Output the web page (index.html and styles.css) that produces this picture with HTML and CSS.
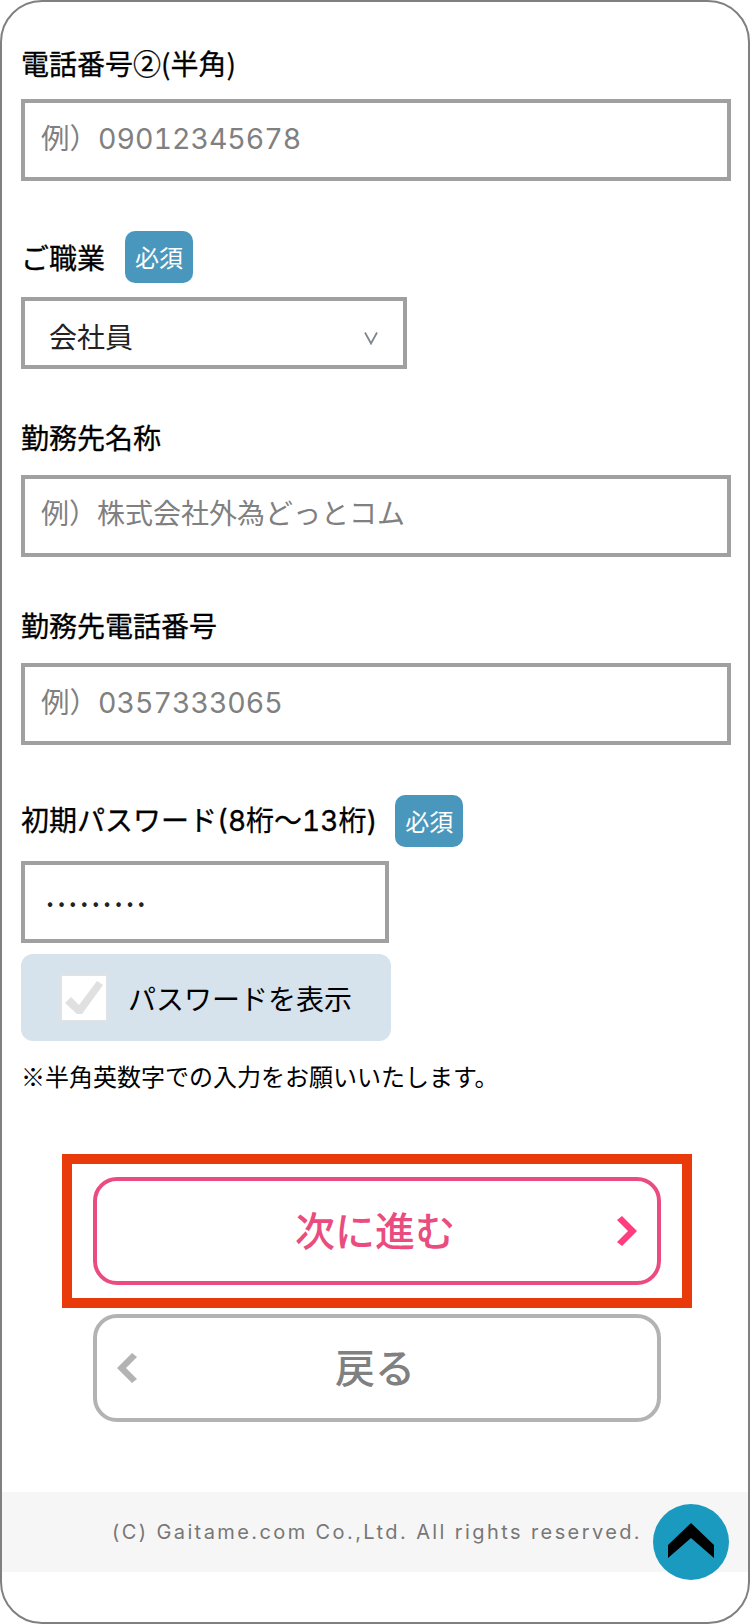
FILE: index.html
```html
<!DOCTYPE html>
<html lang="ja">
<head>
  <meta charset="UTF-8">
  <title>口座開設 お客様情報</title>
  <link rel="stylesheet" href="styles.css">
</head>
<body>

<div class="frame">
  <form class="form">
    <div class="field field-tel2">
      <label class="label">電話番号②(半角)</label>
      <input class="text-input num-input" type="text" placeholder="例）09012345678">
    </div>

    <div class="field field-job">
      <div class="label-row">
        <label class="label">ご職業</label>
        <span class="badge">必須</span>
      </div>
      <div class="select-wrap">
        <select class="select">
          <option>会社員</option>
        </select>
        <svg class="select-caret" width="14" height="14" viewBox="0 0 14 14">
          <path d="M1 1.5 L7 12.5 L13 1.5" fill="none" stroke="#7f868c" stroke-width="1.8"/>
        </svg>
      </div>
    </div>

    <div class="field field-company">
      <label class="label">勤務先名称</label>
      <input class="text-input" type="text" placeholder="例）株式会社外為どっとコム">
    </div>

    <div class="field field-company-tel">
      <label class="label">勤務先電話番号</label>
      <input class="text-input num-input" type="text" placeholder="例）0357333065">
    </div>

    <div class="field field-pass">
      <div class="label-row pass-row">
        <label class="label pass-label">初期パスワード(8桁～13桁)</label>
        <span class="badge">必須</span>
      </div>
      <input class="text-input pass-input" type="password" value="password1">
      <label class="show-pass">
        <span class="check">
          <svg width="44" height="44" viewBox="0 0 44 44">
            <path d="M3 27 L9 21 L17 29 L35 5 L41 9 L20 38 L15 38 Z" fill="#e0e0e0"/>
          </svg>
        </span>
        パスワードを表示
      </label>
      <p class="note">※半角英数字での入力をお願いいたします。</p>
    </div>

    <div class="actions">
      <div class="highlight">
        <button class="btn btn-next" type="button">
          次に進む
          <svg class="btn-arrow arrow-right" width="20" height="30" viewBox="0 0 20 30">
            <path d="M5 0 L20 15 L5 30 L0 26 L11 15 L0 4 Z" fill="#ff3d7f"/>
          </svg>
        </button>
      </div>
      <button class="btn btn-back" type="button">
        <svg class="btn-arrow arrow-left" width="20" height="30" viewBox="0 0 20 30">
          <path d="M15 0 L0 15 L15 30 L20 26 L9 15 L20 4 Z" fill="#b3b3b3"/>
        </svg>
        戻る
      </button>
    </div>
  </form>

  <footer class="footer">(C) Gaitame.com Co.,Ltd. All rights reserved.</footer>

  <a class="to-top" href="#">
    <svg width="46" height="35" viewBox="0 0 46 35">
      <path d="M23 0 L46 22 L46 35 L23 15 L0 35 L0 22 Z" fill="#000"/>
    </svg>
  </a>
</div>

</body>
</html>
```

FILE: styles.css
```css
* {
  box-sizing: border-box;
}

body {
  margin: 0;
  background: #fff;
  font-family: "Noto Sans CJK JP", "Noto Sans", sans-serif;
  color: #000;
}

.frame {
  position: relative;
  width: 750px;
  height: 1624px;
  border: 2px solid #808080;
  border-radius: 42px;
  overflow: hidden;
  background: #fff;
}

.form {
  padding: 0 17px 0 19px;
}

.field-tel2 {
  padding-top: 43px;
}

.field-job {
  padding-top: 50px;
}

.field-company {
  padding-top: 50px;
}

.field-company-tel {
  padding-top: 50px;
}

.field-pass {
  padding-top: 50px;
}

.label {
  display: block;
  font-size: 28px;
  line-height: 36px;
  -webkit-text-stroke: 0.3px #000;
}

.pass-label {
  font-family: "Inter", "Noto Sans CJK JP", sans-serif;
  font-variant-numeric: tabular-nums;
}

.label-row {
  display: flex;
  align-items: center;
  gap: 20px;
}

.pass-row {
  gap: 18px;
}

.field-tel2 .label {
  margin-bottom: 18px;
}

.field-company .label,
.field-company-tel .label {
  margin-bottom: 20px;
}

.badge {
  width: 68px;
  height: 52px;
  border-radius: 10px;
  background: #4a97bd;
  color: #fff;
  font-size: 24px;
  line-height: 52px;
  text-align: center;
}

.text-input {
  display: block;
  width: 100%;
  height: 82px;
  padding: 0 16px 8px;
  border: 4px solid #a0a0a0;
  border-radius: 0;
  background: #fff;
  font-family: inherit;
  font-size: 28px;
  color: #222;
}

.text-input::placeholder {
  color: #808080;
  opacity: 1;
}

.num-input {
  padding: 0 16px 4px;
  font-family: "Inter", "Noto Sans CJK JP", sans-serif;
  font-size: 28.5px;
  font-variant-numeric: tabular-nums;
}

.select-wrap {
  position: relative;
  width: 386px;
  margin-top: 14px;
}

.select {
  display: block;
  width: 100%;
  height: 72px;
  padding: 5px 24px 0;
  border: 4px solid #a0a0a0;
  border-radius: 0;
  background: #fff;
  font-family: inherit;
  font-size: 28px;
  color: #222;
  appearance: none;
}

.select-caret {
  position: absolute;
  top: 34px;
  right: 29px;
}

.pass-input {
  width: 368px;
  margin-top: 14px;
  padding: 0 22px;
  font-size: 18px;
  letter-spacing: 5.3px;
}

.show-pass {
  display: flex;
  align-items: center;
  gap: 20px;
  width: 370px;
  height: 87px;
  margin-top: 11px;
  padding-left: 39px;
  border-radius: 12px;
  background: #d6e2ec;
  font-size: 28px;
}

.check {
  display: flex;
  width: 48px;
  height: 48px;
  align-items: center;
  justify-content: center;
  border: 2px solid #dfe3e6;
  background: #fff;
}

.note {
  margin: 17px 0 0;
  font-size: 24px;
  line-height: 36px;
}

.actions {
  display: flex;
  flex-direction: column;
  align-items: center;
  gap: 6px;
  margin: 60px 0 0 2px;
}

.highlight {
  width: 630px;
  padding: 13px 21px;
  border: 10px solid #e83a0a;
}

.btn {
  position: relative;
  display: block;
  width: 568px;
  height: 108px;
  padding: 0 4px 4px 0;
  border: 4px solid;
  border-radius: 24px;
  background: #fff;
  font-family: inherit;
  font-size: 40px;
  font-weight: 500;
}

.btn-next {
  border-color: #ea4c7f;
  color: #ea4c7f;
}

.btn-back {
  border-color: #b3b3b3;
  color: #808080;
}

.btn-arrow {
  position: absolute;
  top: 35px;
}

.arrow-right {
  right: 20px;
}

.arrow-left {
  left: 20px;
}

.footer {
  height: 80px;
  margin-top: 70px;
  padding: 0 0 0 110px;
  background: #f6f6f6;
  color: #777;
  font-family: "Inter", "Noto Sans", sans-serif;
  font-size: 20px;
  line-height: 80px;
  letter-spacing: 2.4px;
}

.to-top {
  position: absolute;
  top: 1502px;
  left: 651px;
  display: flex;
  width: 76px;
  height: 76px;
  padding-top: 19px;
  justify-content: center;
  border-radius: 50%;
  background: #1b9abf;
}
```
